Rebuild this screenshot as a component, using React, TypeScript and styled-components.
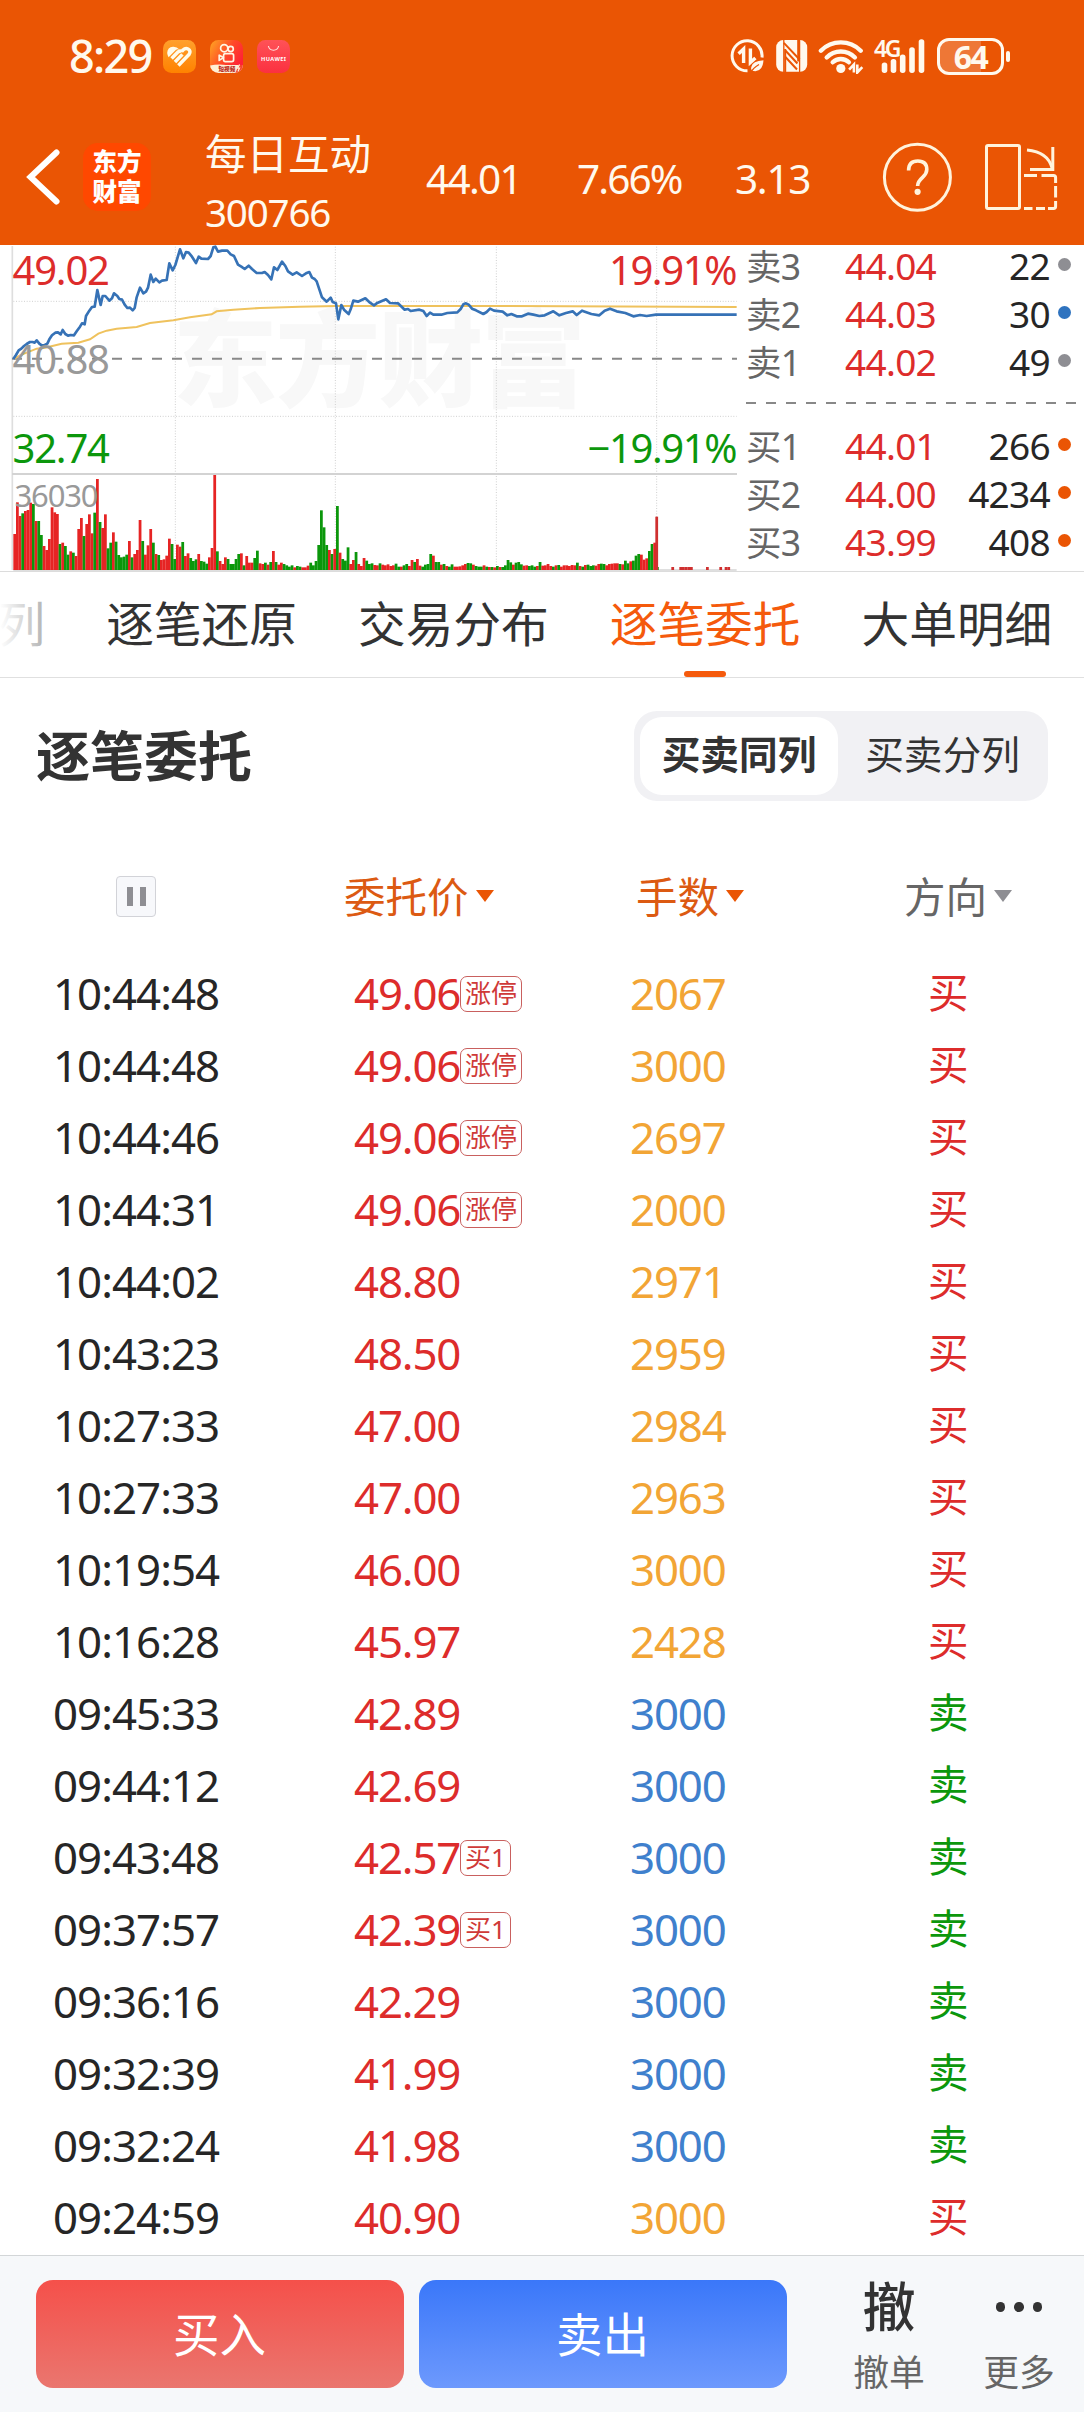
import React from "react";
import styled, { createGlobalStyle, css } from "styled-components";

const FONT = `"Noto Sans", "Noto Sans CJK SC", sans-serif`;

const color = {
  brand: "#ea5504",
  tab: "#f55a0c",
  red: "#dd2c2b",
  green: "#0c970c",
  blue: "#3f80cd",
  gold: "#f2a535",
  ink: "#262626",
  dark: "#333333",
  grey: "#666666",
};

const Global = createGlobalStyle`
  * { box-sizing: border-box; }
  body { margin: 0; background: #fff; }
`;

const Screen = styled.div`
  width: 1084px;
  height: 2412px;
  display: flex;
  flex-direction: column;
  background: #fff;
  color: ${color.ink};
  font-family: ${FONT};
  overflow: hidden;
  white-space: nowrap;
`;

/* ---------- status bar ---------- */

const Header = styled.header`
  height: 245px;
  flex: none;
  background: ${color.brand};
  color: #fff9ee;
`;

const StatusBar = styled.div`
  height: 112px;
  padding: 0 80px 0 69px;
  display: flex;
  align-items: center;
`;

const Clock = styled.span`
  width: 94px;
  font-size: 45px;
  line-height: 60px;
  font-weight: 500;
  letter-spacing: -1.7px;
`;

const AppIcons = styled.div`
  display: flex;
  gap: 14px;
  flex: 1;
`;

const StatusIcons = styled.div`
  display: flex;
  align-items: center;
`;

const Glyph = styled.svg<{ $left?: number }>`
  display: block;
  flex: none;
  margin-left: ${(p) => p.$left ?? 0}px;
`;

const Signal = styled.div`
  position: relative;
  margin-left: 10px;
`;

const SignalType = styled.span`
  position: absolute;
  left: 0;
  top: -4px;
  font-size: 23px;
  line-height: 28px;
  font-weight: 600;
  letter-spacing: -2.4px;
`;

const Battery = styled.div`
  position: relative;
  width: 67px;
  height: 37px;
  margin-left: 11px;
  border: 3px solid #fff9ee;
  border-radius: 12px;
  display: flex;
  align-items: center;
  justify-content: center;
  font-size: 32px;
  line-height: 31px;
  font-weight: 700;
  letter-spacing: -1.6px;
  background: linear-gradient(90deg, rgba(255, 255, 255, 0.2) 67%, transparent 67%);

  &::after {
    content: "";
    position: absolute;
    right: -9px;
    top: 10px;
    width: 4px;
    height: 11px;
    border-radius: 2px;
    background: #fff9ee;
  }
`;

/* ---------- title bar ---------- */

const TitleBar = styled.div`
  height: 133px;
  padding-left: 26px;
  display: flex;
  align-items: flex-start;
`;

const BackSlot = styled.div`
  width: 57px;
  padding-top: 37px;
`;

const Logo = styled.div`
  width: 68px;
  height: 68px;
  margin-top: 31px;
  padding-top: 4px;
  border-radius: 15px;
  background: #ff4800;
  color: #fff;
  font-weight: 800;
  font-size: 24.5px;
  line-height: 29.6px;
  text-align: center;
`;

const Stock = styled.div`
  width: 221px;
  margin-left: 54px;
  padding-top: 11px;
`;

const StockName = styled.div`
  font-size: 41.5px;
  line-height: 62px;
`;

const StockCode = styled.div`
  font-size: 38.6px;
  line-height: 54px;
  letter-spacing: -1.2px;
`;

const Figure = styled.div<{ $w: number; $ls: number }>`
  width: ${(p) => p.$w}px;
  padding-top: 37px;
  font-size: 40.5px;
  line-height: 60px;
  letter-spacing: ${(p) => p.$ls}px;
`;

const HelpSlot = styled.div`
  width: 102px;
  padding-top: 29px;
  margin-left: 1px;
`;

const RotateSlot = styled.div`
  padding-top: 29px;
`;

/* ---------- quote area ---------- */

const Quote = styled.section`
  height: 327px;
  flex: none;
  display: flex;
  border-bottom: 1px solid #dcdcdc;
`;

const ChartBox = styled.div`
  position: relative;
  width: 740px;
`;

const ChartLabel = styled.span<{ $top: number; $color: string; $right?: boolean; $small?: boolean }>`
  position: absolute;
  top: ${(p) => p.$top}px;
  ${(p) => (p.$right ? "right: 4px;" : `left: ${p.$small ? 14.5 : 12.5}px;`)}
  color: ${(p) => p.$color};
  font-size: ${(p) => (p.$small ? 31 : 40)}px;
  line-height: 40px;
  letter-spacing: ${(p) => (p.$small ? -1.15 : p.$right ? -1.4 : -1.2)}px;
`;

const Book = styled.div`
  flex: 1;
  margin-top: -3px;
  padding-left: 6px;
`;

const Level = styled.div`
  height: 48px;
  display: grid;
  grid-template-columns: 99px 110px 95px 1fr;
  align-items: center;
  font-size: 37px;
  line-height: 48px;
  letter-spacing: -0.7px;
`;

const LevelName = styled.span`
  color: ${color.grey};
  font-size: 35.5px;
`;

const LevelPrice = styled.span`
  color: ${color.red};
`;

const LevelQty = styled.span`
  text-align: right;
`;

const LevelDot = styled.i<{ $color: string }>`
  width: 13px;
  height: 13px;
  margin: -3px 0 0 8px;
  border-radius: 50%;
  background: ${(p) => p.$color};
`;

const BookDivider = styled.div`
  height: 2px;
  width: 331px;
  margin: 16px 0 18px;
  background: repeating-linear-gradient(90deg, #888 0 10px, transparent 10px 20px);
`;

/* ---------- tabs ---------- */

const Tabs = styled.nav`
  position: relative;
  height: 106px;
  flex: none;
  display: flex;
  gap: 61px;
  border-bottom: 1px solid #e0e0e0;

  &::before {
    content: "";
    position: absolute;
    left: 0;
    top: 0;
    width: 60px;
    height: 100px;
    background: linear-gradient(90deg, #fff 0%, rgba(255, 255, 255, 0.5) 100%);
  }
`;

const Tab = styled.div<{ $active?: boolean }>`
  display: flex;
  flex-direction: column;
  align-items: center;
  justify-content: space-between;
  font-size: 47.7px;
  line-height: 104px;
  height: 105px;
  color: ${(p) => (p.$active ? color.tab : color.dark)};

  &:first-child {
    margin-left: -2.5px;
  }
`;

const TabMark = styled.div`
  width: 42px;
  height: 6px;
  flex: none;
  margin-top: -5px;
  border-radius: 3px;
  background: ${color.tab};
`;

/* ---------- section head ---------- */

const SectionHead = styled.div`
  height: 156px;
  flex: none;
  padding: 0 36px;
  display: flex;
  align-items: center;
  justify-content: space-between;
`;

const SectionTitle = styled.h1`
  margin: 0;
  font-size: 54px;
  line-height: 70px;
  font-weight: 700;
  color: ${color.dark};
`;

const Segmented = styled.div`
  width: 414px;
  height: 90px;
  padding: 6px;
  display: flex;
  border-radius: 23px;
  background: #f1f1f4;
`;

const Segment = styled.div<{ $on?: boolean }>`
  width: ${(p) => (p.$on ? 198 : 204)}px;
  height: 78px;
  padding-left: ${(p) => (p.$on ? 0 : 5)}px;
  border-radius: 22px;
  font-size: 38.7px;
  line-height: 75px;
  text-align: center;
  color: ${color.dark};
  ${(p) =>
    p.$on &&
    css`
      background: #fff;
      font-weight: 600;
    `}
`;

/* ---------- orders table ---------- */

const columns = css`
  display: grid;
  grid-template-columns: 301px 276px 276px 1fr;
  padding-left: 53px;
  align-items: center;
`;

const TableHead = styled.div`
  ${columns}
  height: 123px;
  padding-top: 2px;
  flex: none;
`;

const HeadCell = styled.div<{ $shift: number; $color: string }>`
  display: flex;
  align-items: center;
  gap: 7px;
  padding-left: ${(p) => p.$shift}px;
  margin-left: -10px;
  font-size: 41.5px;
  line-height: 60px;
  color: ${(p) => p.$color};
`;

const Caret = styled.i<{ $color: string }>`
  margin-top: -1px;
  border: 9px solid transparent;
  border-top: 12px solid ${(p) => p.$color};
  border-bottom: 0;
`;

const Pause = styled.div`
  width: 40px;
  height: 41px;
  margin-left: 63px;
  display: flex;
  align-items: center;
  justify-content: center;
  gap: 7px;
  border: 1px solid #d2d3d8;
  border-radius: 4px;
  background: #f7f8fb;
`;

const PauseBar = styled.i`
  width: 6px;
  height: 19px;
  background: #8e8e93;
`;

const Order = styled.div`
  ${columns}
  height: 72px;
  flex: none;
  font-size: 43.8px;
  line-height: 72px;
  letter-spacing: -1.15px;
`;

const Time = styled.span`
  letter-spacing: -0.95px;
`;

const PriceCell = styled.div`
  display: flex;
  align-items: center;
  color: ${color.red};
`;

const PriceValue = styled.span`
  width: 106px;
`;

const Badge = styled.span`
  height: 36px;
  margin-top: 2px;
  padding: 0 4px;
  border: 1px solid #c9605e;
  border-radius: 7px;
  font-size: 26px;
  line-height: 33px;
  letter-spacing: 0;
  color: #cf3a38;
`;

const Lots = styled.span<{ $color: string }>`
  color: ${(p) => p.$color};
`;

const Side = styled.span<{ $buy: boolean }>`
  padding-left: 22px;
  font-size: 40.5px;
  color: ${(p) => (p.$buy ? color.red : color.green)};
`;

/* ---------- footer ---------- */

const Footer = styled.footer`
  height: 157px;
  flex: none;
  margin-top: auto;
  padding: 24px 0 0 36px;
  display: flex;
  border-top: 1px solid #d3d6d8;
  background: #f6f8fa;
`;

const Trade = styled.button<{ $from: string; $to: string }>`
  width: 368px;
  height: 108px;
  margin: 0 15px 0 0;
  padding: 0 1px 0 0;
  border: 0;
  border-radius: 17px;
  background: linear-gradient(180deg, ${(p) => p.$from}, ${(p) => p.$to});
  color: #fff;
  font-family: ${FONT};
  font-size: 46.5px;
  line-height: 108px;
`;

const Action = styled.div<{ $left: number }>`
  width: 72px;
  margin-left: ${(p) => p.$left}px;
  display: flex;
  flex-direction: column;
  align-items: center;
`;

const ActionIcon = styled.div`
  height: 54px;
  display: flex;
  align-items: center;
  gap: 9px;
  font-size: 53px;
  line-height: 52px;
  font-weight: 500;
  color: ${color.dark};
`;

const ActionDot = styled.i`
  width: 9.4px;
  height: 9.4px;
  border-radius: 50%;
  background: ${color.dark};
`;

const ActionLabel = styled.div`
  margin-top: 17px;
  font-size: 35.8px;
  line-height: 42px;
  color: ${color.grey};
`;

/* ---------- data ---------- */

const priceLine =
  "40,357 48,345 56,331 64,326 72,318 80,312 90,306 98,306 104,308 110,301 118,311 126,317 134,315 142,311 148,298 156,286 166,278 174,277 182,283 188,270 196,282 204,287 212,285 222,286 230,274 240,260 246,250 254,253 258,228 268,212 276,201 284,200 292,150 302,195 308,168 316,168 328,182 336,175 342,160 352,168 358,177 366,179 374,194 382,204 390,203 398,211 404,204 410,172 420,143 430,160 438,155 444,143 452,104 460,126 467,116 478,127 486,122 500,120 508,70 518,91 526,75 540,28 550,55 558,36 566,38 576,50 588,69 596,50 604,56 624,57 632,48 640,22 646,20 654,35 666,32 682,32 692,43 702,48 714,74 724,80 734,87 746,77 756,87 770,99 786,99 794,96 804,105 814,118 822,82 832,90 846,65 856,78 864,94 878,104 890,97 906,108 918,100 928,96 936,113 944,117 950,124 958,148 966,172 980,185 992,173 998,186 1008,190 1015,238 1024,195 1032,209 1046,222 1052,208 1060,182 1074,185 1096,175 1110,188 1122,196 1130,190 1158,178 1170,189 1194,190 1214,209 1224,207 1232,213 1258,209 1270,213 1280,228 1290,218 1300,224 1324,224 1342,219 1372,217 1382,207 1390,193 1398,190 1406,194 1416,206 1428,211 1450,222 1460,216 1470,206 1482,212 1508,215 1522,226 1534,222 1550,229 1566,229 1584,221 1600,224 1618,228 1634,226 1660,214 1678,226 1698,219 1718,214 1730,225 1746,212 1774,222 1798,226 1814,212 1830,206 1850,214 1876,219 1900,229 1920,225 1940,228 1968,224 2210,224";

const averageLine =
  "44,356 60,346 80,338 110,326 135,323 160,317 185,311 235,308 270,298 295,281 320,272 350,266 410,261 450,249 520,241 570,232 635,223 650,214 700,209 780,204 900,200 1010,198 1110,198 1500,198 2210,201";

/* Height of each one-minute volume bar, prefixed with its direction. */
const volumes = (
  "r108 r203 r162 g170 r177 r180 r202 g198 r147 g147 g105 r72 r60 r93 r188 r173 r168 g78 r82 g72 g46 r56 g52 r42 r123 r156 g102 r138 r167 r110 g172 r273 g144 r126 r167 g65 g82 r113 g85 g45 g38 g40 g46 r87 g38 r48 r60 r150 g87 r46 r74 r123 g82 r48 g45 r30 r32 r43 r94 g78 g33 r76 r70 g84 r42 r50 g36 g27 g32 r48 g27 g25 g19 r38 r66 r285 g56 r27 r18 r38 g33 g18 g18 g33 g48 r50 g14 r42 r22 r22 g36 g58 r20 r18 g22 r16 g24 r57 g24 r16 r22 g18 g14 g10 g14 r8 g12 g10 r8 r8 r13 g22 g14 g27 g75 g179 g128 g75 r60 g48 r63 g192 r52 g33 g28 g68 r18 r30 g54 r18 r12 r36 g28 g18 g20 r15 r14 g20 r16 r14 r17 r12 r14 g19 g10 r10 g14 g18 r12 r30 g24 r33 r13 g10 g16 g18 g48 r43 g24 g24 r16 g18 r12 g10 g17 r10 r10 r11 r14 r18 g21 g20 r16 g12 g10 g10 r14 g10 r9 g9 r8 g12 r9 g9 g14 g30 g23 r16 g22 g24 g17 r13 r14 g12 g14 g10 r12 g24 r13 r14 r18 r12 g10 r14 g15 r10 r14 r14 r12 r15 r14 g22 r12 g10 r15 g16 g12 g14 r13 r18 g19 g18 r14 r18 r19 r20 r20 g18 r17 g28 g20 r26 g28 g43 g48 r46 r31 r35 g57 g78 r82 g9"
).split(" ");

const tailBars: [number, number][] = [
  [1966, 160], [2014, 9], [2038, 9], [2046, 9], [2054, 9], [2062, 9], [2070, 9],
  [2118, 9], [2158, 9], [2174, 9], [2182, 9],
];

const levels = {
  sell: [
    ["卖3", "44.04", "22", "#8e8e93"],
    ["卖2", "44.03", "30", "#2f73bf"],
    ["卖1", "44.02", "49", "#8e8e93"],
  ],
  buy: [
    ["买1", "44.01", "266", color.brand],
    ["买2", "44.00", "4234", color.brand],
    ["买3", "43.99", "408", color.brand],
  ],
};

type Row = { t: string; p: string; n: string; buy: boolean; tag?: string };
const orders: Row[] = [
  { t: "10:44:48", p: "49.06", n: "2067", buy: true, tag: "涨停" },
  { t: "10:44:48", p: "49.06", n: "3000", buy: true, tag: "涨停" },
  { t: "10:44:46", p: "49.06", n: "2697", buy: true, tag: "涨停" },
  { t: "10:44:31", p: "49.06", n: "2000", buy: true, tag: "涨停" },
  { t: "10:44:02", p: "48.80", n: "2971", buy: true },
  { t: "10:43:23", p: "48.50", n: "2959", buy: true },
  { t: "10:27:33", p: "47.00", n: "2984", buy: true },
  { t: "10:27:33", p: "47.00", n: "2963", buy: true },
  { t: "10:19:54", p: "46.00", n: "3000", buy: true },
  { t: "10:16:28", p: "45.97", n: "2428", buy: true },
  { t: "09:45:33", p: "42.89", n: "3000", buy: false },
  { t: "09:44:12", p: "42.69", n: "3000", buy: false },
  { t: "09:43:48", p: "42.57", n: "3000", buy: false, tag: "买1" },
  { t: "09:37:57", p: "42.39", n: "3000", buy: false, tag: "买1" },
  { t: "09:36:16", p: "42.29", n: "3000", buy: false },
  { t: "09:32:39", p: "41.99", n: "3000", buy: false },
  { t: "09:32:24", p: "41.98", n: "3000", buy: false },
  { t: "09:24:59", p: "40.90", n: "3000", buy: true },
];

/* ---------- pieces ---------- */

function AppIconRow() {
  return (
    <AppIcons>
      <Glyph width="33" height="33" viewBox="0 0 33 33">
        <defs>
          <linearGradient id="health" x1="0" y1="0" x2="0" y2="1">
            <stop offset="0" stopColor="#ffa02c" />
            <stop offset="1" stopColor="#ff8200" />
          </linearGradient>
        </defs>
        <rect width="33" height="33" rx="8.5" fill="url(#health)" />
        <path
          d="M16.3 9.6 Q14 6.6 10 6.8 Q4.4 7.4 4.2 13 Q4.4 15.4 5.6 17.2 L13 9.8 Q14.6 8.6 16.3 9.6 Z"
          fill="#fffbe9"
        />
        <path
          d="M8.6 18.4 L15.2 11.8 Q17.6 10 19 12 M12 22 L19.4 14.4 M15.4 25.4 L26 14.6 Q28.4 11 25 9 Q22.4 7.8 20 10 L18.6 11.6"
          fill="none" stroke="#fffbe9" strokeWidth="3.5" strokeLinejoin="round"
        />
      </Glyph>
      <Glyph width="33" height="33" viewBox="0 0 33 33">
        <defs>
          <linearGradient id="video" x1="0" y1="0" x2="1" y2="0.6">
            <stop offset="0" stopColor="#ffa722" />
            <stop offset="0.55" stopColor="#ff4a28" />
            <stop offset="1" stopColor="#ff2136" />
          </linearGradient>
          <clipPath id="videoClip"><rect width="33" height="33" rx="8.5" /></clipPath>
        </defs>
        <g clipPath="url(#videoClip)">
          <rect width="33" height="33" fill="url(#video)" />
          <g fill="none" stroke="#fff6e4" strokeWidth="1.7">
            <circle cx="14.2" cy="8.2" r="3.6" />
            <circle cx="20.7" cy="9" r="2.6" />
            <rect x="13.6" y="13.6" width="10" height="8" rx="1.8" />
            <path d="M13.4 17.6 L9.2 15.2 V20.4 Z" strokeLinejoin="round" />
          </g>
          <path d="M0 25.5 Q8 23.8 16 25 H33 V33 H0 Z" fill="#fff0d6" />
          <path d="M28.5 25 H33 V33 H25.5 Z" fill="#f8452b" />
          <text x="8.5" y="31" fontSize="5.6" fontWeight="900" fill="#b82a1c" fontFamily="Noto Sans CJK SC">短视频</text>
          <path d="M29.6 24.5 L27.4 28.2 H29.4 L28 31.4" fill="none" stroke="#fff0d6" strokeWidth="1.3" />
        </g>
      </Glyph>
      <Glyph width="33" height="33" viewBox="0 0 33 33">
        <defs>
          <linearGradient id="store" x1="0" y1="0" x2="0" y2="1">
            <stop offset="0" stopColor="#ff5257" />
            <stop offset="1" stopColor="#fb3040" />
          </linearGradient>
        </defs>
        <rect width="33" height="33" rx="8.5" fill="url(#store)" />
        <path d="M11.4 6 A5.2 5.2 0 0 0 21.6 6" fill="none" stroke="#ffe3df" strokeWidth="1.1" />
        <text x="16.5" y="21" fontSize="5.6" fontWeight="700" textAnchor="middle" textLength="25" fill="#fff" fontFamily="Noto Sans">HUAWEI</text>
      </Glyph>
    </AppIcons>
  );
}

function StatusIconRow() {
  const c = "#fff9ee";
  return (
    <StatusIcons>
      <Glyph width="34" height="34" viewBox="730 39.5 34 34">
        <path d="M747.5 71.3 A15 15 0 1 1 762 58" fill="none" stroke={c} strokeWidth="3" />
        <path d="M738.6 54.2 L743.6 49.4 V63.6 M750.4 49 V63 L755.4 58.4" fill="none" stroke={c} strokeWidth="3.4" />
        <path d="M763.5 60.8 Q752.5 61.5 751.3 67.4 Q750.8 70 752 71.2 Q762.5 74 763.5 60.8 Z" fill={c} />
        <path d="M750.5 73.5 Q753 68.5 759 65" fill="none" stroke={color.brand} strokeWidth="1.4" />
      </Glyph>
      <Glyph $left={12} width="32" height="34" viewBox="776 39.5 32 34">
        <rect x="776.2" y="40.6" width="31" height="31.6" rx="7" fill={c} />
        <g fill="none" stroke={color.brand}>
          <path d="M783.8 40.6 V72.5 M799.6 40.4 V72.4" strokeWidth="1.3" />
          <path d="M783.8 43.4 L799.6 60 M785.4 51 L797.4 64 M785.4 57.5 L797 70" strokeWidth="2" />
          <path d="M785.2 49.5 V72.4 M798.2 40.4 V62" strokeWidth="2" />
        </g>
      </Glyph>
      <Glyph $left={10} width="46" height="36" viewBox="818.5 37.5 46 36">
        <g fill="none" stroke={c} strokeWidth="4.4" strokeLinecap="round">
          <path d="M821.4 50.2 A28 28 0 0 1 861.2 50.2" />
          <path d="M827.2 57 A19.5 19.5 0 0 1 855.4 57" />
          <path d="M833.2 61.8 A11.5 11.5 0 0 1 849.4 61.8" />
        </g>
        <circle cx="841.3" cy="68" r="4.6" fill={c} />
        <path d="M849.6 69.2 L854.4 64 V72 M857.8 64 V72 L862.8 66.6" fill="none" stroke={c} strokeWidth="2.6" />
      </Glyph>
      <Signal>
        <SignalType>4G</SignalType>
        <Glyph width="52" height="36" viewBox="874.5 37.5 52 36">
          {[[885, 62], [894, 58.4], [903.2, 54], [912.5, 46.8], [922, 38.7]].map(([x, y]) => (
            <rect key={x} x={x - 2.8} y={y} width="5.6" height={72.4 - y} rx="2.6" fill={c} />
          ))}
        </Glyph>
      </Signal>
      <Battery>64</Battery>
    </StatusIcons>
  );
}

function Chart() {
  return (
    <ChartBox>
      <Glyph width="740" height="326" viewBox="0 15 2220 978">
        <text
          x="518" y="475" fontSize="314" fontWeight="900" fill="#f8f8f8"
          textLength="1240" fontFamily="Noto Sans CJK SC"
        >
          东方财富
        </text>
        <g stroke="#cfcfcf" strokeWidth="3" strokeDasharray="3 5">
          <path d="M526 20V990M1006 20V990M1489 20V990M1970 20V990M40 184H2210M40 529H2210" />
        </g>
        <path d="M37 18V990" stroke="#dedede" strokeWidth="5" />
        <path d="M40 990H2210" stroke="#d4d4d4" strokeWidth="5" />
        <path d="M36 702H2211" stroke="#d3d3d3" strokeWidth="6" />
        <path d="M36 356H2211" stroke="#888" strokeWidth="6" strokeDasharray="30 30" />
        {volumes.map((v, i) => (
          <rect
            key={i}
            x={40 + i * 8}
            y={990 - Number(v.slice(1))}
            width="8.3"
            height={Number(v.slice(1))}
            fill={v[0] === "r" ? "#e62424" : "#0b970b"}
          />
        ))}
        {tailBars.map(([x, h]) => (
          <rect key={x} x={x} y={990 - h} width="8.3" height={h} fill="#cf3030" />
        ))}
        <polyline points={averageLine} fill="none" stroke="#efc25d" strokeWidth="6" />
        <polyline points={priceLine} fill="none" stroke="#3672b6" strokeWidth="8" strokeLinejoin="round" />
      </Glyph>
      <ChartLabel $top={5} $color={color.red}>49.02</ChartLabel>
      <ChartLabel $top={94} $color="#999">40.88</ChartLabel>
      <ChartLabel $top={183} $color={color.green}>32.74</ChartLabel>
      <ChartLabel $top={230} $color="#999" $small>36030</ChartLabel>
      <ChartLabel $top={5} $color={color.red} $right>19.91%</ChartLabel>
      <ChartLabel $top={183} $color={color.green} $right>−19.91%</ChartLabel>
    </ChartBox>
  );
}

function LevelRows({ rows }: { rows: string[][] }) {
  return (
    <>
      {rows.map(([name, price, qty, dot]) => (
        <Level key={name}>
          <LevelName>{name}</LevelName>
          <LevelPrice>{price}</LevelPrice>
          <LevelQty>{qty}</LevelQty>
          <LevelDot $color={dot} />
        </Level>
      ))}
    </>
  );
}

export default function App() {
  return (
    <Screen>
      <Global />
      <Header>
        <StatusBar>
          <Clock>8:29</Clock>
          <AppIconRow />
          <StatusIconRow />
        </StatusBar>
        <TitleBar>
          <BackSlot>
            <Glyph width="36" height="56" viewBox="0 0 36 56">
              <path d="M30.5 3.5 L4.5 28 L30.5 52.5" fill="none" stroke="#fff" strokeWidth="6" strokeLinecap="round" />
            </Glyph>
          </BackSlot>
          <Logo>东方<br />财富</Logo>
          <Stock>
            <StockName>每日互动</StockName>
            <StockCode>300766</StockCode>
          </Stock>
          <Figure $w={151} $ls={-1.7}>44.01</Figure>
          <Figure $w={158} $ls={-1.9}>7.66%</Figure>
          <Figure $w={145} $ls={-1.3}>3.13</Figure>
          <HelpSlot>
            <Glyph width="74" height="74" viewBox="0 0 74 74">
              <circle cx="36.4" cy="36.3" r="33" fill="none" stroke="#fff3dc" strokeWidth="3" />
              <path
                d="M27.6 29.5 Q27.6 20 36.8 20 Q45.8 20 45.8 28.6 Q45.8 32.6 41.6 36.4 Q36.6 40.8 36.6 45"
                fill="none" stroke="#fff3dc" strokeWidth="3.6"
              />
              <circle cx="36.6" cy="50.8" r="3.1" fill="#fff3dc" />
            </Glyph>
          </HelpSlot>
          <RotateSlot>
            <Glyph width="76" height="74" viewBox="984 141 76 74">
              <g fill="none" stroke="#fff3dc" strokeWidth="3">
                <rect x="987.5" y="145.5" width="33" height="63" rx="1.5" />
                <path d="M1028 150 Q1049 152 1053 168" />
                <path d="M1053.8 147 V169.6 H1031" />
                <path d="M1025 175.4 H1038 M1042.5 175.4 H1054.5 Q1056.6 175.4 1056.6 177.5 V183 M1056.6 186 V197.5 M1056.6 201 V206.5 Q1056.6 208.4 1054.5 208.4 H1049 M1046 208.4 H1037 M1033.5 208.4 H1025" />
              </g>
            </Glyph>
          </RotateSlot>
        </TitleBar>
      </Header>

      <Quote>
        <Chart />
        <Book>
          <LevelRows rows={levels.sell} />
          <BookDivider />
          <LevelRows rows={levels.buy} />
        </Book>
      </Quote>

      <Tabs>
        <Tab>列</Tab>
        <Tab>逐笔还原</Tab>
        <Tab>交易分布</Tab>
        <Tab $active>
          逐笔委托
          <TabMark />
        </Tab>
        <Tab>大单明细</Tab>
      </Tabs>

      <SectionHead>
        <SectionTitle>逐笔委托</SectionTitle>
        <Segmented>
          <Segment $on>买卖同列</Segment>
          <Segment>买卖分列</Segment>
        </Segmented>
      </SectionHead>

      <TableHead>
        <Pause>
          <PauseBar />
          <PauseBar />
        </Pause>
        <HeadCell $shift={0} $color="#dc5a12">
          委托价
          <Caret $color={color.brand} />
        </HeadCell>
        <HeadCell $shift={16} $color="#dc5a12">
          手数
          <Caret $color={color.brand} />
        </HeadCell>
        <HeadCell $shift={8} $color={color.grey}>
          方向
          <Caret $color="#8e8e93" />
        </HeadCell>
      </TableHead>

      {orders.map((o, i) => (
        <Order key={i}>
          <Time>{o.t}</Time>
          <PriceCell>
            <PriceValue>{o.p}</PriceValue>
            {o.tag && <Badge>{o.tag}</Badge>}
          </PriceCell>
          <Lots $color={o.buy ? color.gold : color.blue}>{o.n}</Lots>
          <Side $buy={o.buy}>{o.buy ? "买" : "卖"}</Side>
        </Order>
      ))}

      <Footer>
        <Trade $from="#f5504a" $to="#ea766f">买入</Trade>
        <Trade $from="#3a77f9" $to="#6d99fd">卖出</Trade>
        <Action $left={51}>
          <ActionIcon>撤</ActionIcon>
          <ActionLabel>撤单</ActionLabel>
        </Action>
        <Action $left={58}>
          <ActionIcon>
            <ActionDot />
            <ActionDot />
            <ActionDot />
          </ActionIcon>
          <ActionLabel>更多</ActionLabel>
        </Action>
      </Footer>
    </Screen>
  );
}
